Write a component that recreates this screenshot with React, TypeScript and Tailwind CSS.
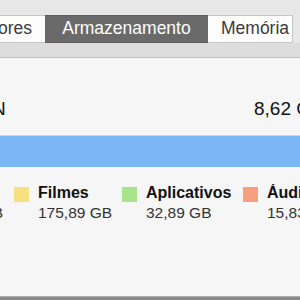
import React from "react";

const legend = [
  { color: "bg-[#f7e07f]", label: "Filmes", value: "175,89 GB", width: "w-[108px]" },
  { color: "bg-[#a9e38b]", label: "Aplicativos", value: "32,89 GB", width: "w-[121px]" },
  { color: "bg-[#f99f7e]", label: "Áudio", value: "15,83 GB", width: "w-[80px]" },
];

export default function App() {
  return (
    <div className="flex h-[300px] w-[300px] flex-col overflow-hidden bg-[#f6f6f6] font-['Liberation_Sans',Arial,sans-serif]">
      {/* toolbar + tabs */}
      <div className="bg-[#e7e7e7] pt-[15px]">
        <div className="flex h-[28px] text-[17.5px] leading-none">
          <div className="flex w-[45px] shrink-0 items-center justify-end overflow-hidden whitespace-nowrap border-y border-[#c6c6c6] bg-[#fdfdfd] pr-[13px] text-[#3a3a3a]">
            Monitores
          </div>
          <div className="flex w-[163px] shrink-0 items-center justify-center border-y border-[#5c5c5c] bg-[#6a6a6a] text-white">
            Armazenamento
          </div>
          <div className="flex w-[85px] shrink-0 items-center overflow-hidden whitespace-nowrap border border-l-0 border-[#c6c6c6] bg-[#fdfdfd] pl-[13px] text-[#3a3a3a]">
            Memória
          </div>
        </div>
        <div className="h-[15px] border-b border-[#bdbdbd] bg-[#dddddd]" />
      </div>

      {/* content */}
      <div className="flex flex-1 flex-col">
        <div className="mt-[40px] flex h-[22px] items-center overflow-hidden text-[19px] leading-[22px] text-[#111]">
          <div className="w-[254px] shrink-0 overflow-hidden whitespace-nowrap">
            <span className="-ml-[8px] inline-block">N</span>
          </div>
          <span className="shrink-0 whitespace-nowrap">8,62 GB disponíveis</span>
        </div>

        <div className="mt-[15px] h-[32px] shrink-0 border-t border-[#d2d2d2] bg-[#7cb6f6]" />

        <div className="mt-[17px] flex overflow-hidden">
          <div className="w-[14px] shrink-0 overflow-hidden whitespace-nowrap">
            <div className="h-[18px]" />
            <div className="mt-[2px] flex justify-end text-[15.5px] leading-[18px] text-[#333]">
              <span className="mr-[11px] shrink-0">GB</span>
            </div>
          </div>
          {legend.map((item) => (
            <div key={item.label} className={`flex shrink-0 gap-[9px] whitespace-nowrap ${item.width}`}>
              <div className={`mt-[3px] h-[15px] w-[15px] shrink-0 ${item.color}`} />
              <div className="flex flex-col">
                <span className="text-[16px] font-bold leading-[18px] text-[#111]">{item.label}</span>
                <span className="mt-[2px] text-[15.5px] leading-[18px] text-[#333]">{item.value}</span>
              </div>
            </div>
          ))}
        </div>

        <div className="flex-1" />
        <div className="h-[4px] border-t border-[#b0b0b0] bg-[#8a8a8a]" />
      </div>
    </div>
  );
}
